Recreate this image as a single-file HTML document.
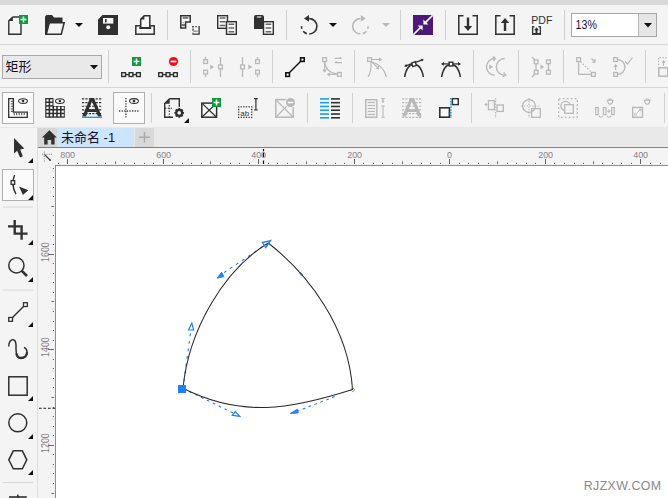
<!DOCTYPE html>
<html lang="zh-CN">
<head>
<meta charset="utf-8">
<title>未命名 -1</title>
<style>
html,body{margin:0;padding:0;}
body{width:668px;height:498px;overflow:hidden;background:#fff;position:relative;font-family:"Liberation Sans","Noto Sans CJK SC",sans-serif;}
.a{position:absolute;}
#topband{left:0;top:0;width:668px;height:4.8px;background:#d9d9d9;}
#bars{left:0;top:4.8px;width:668px;height:123px;background:#f4f4f4;}
.hsep{left:0;width:668px;height:1px;background:#d6d6d6;}
#tabstrip{left:0;top:127px;width:668px;height:20px;background:#e9e9e9;}
#hometab{left:38px;top:127.5px;width:19px;height:19.5px;background:#d6d6d6;}
#doctab{left:57px;top:127.5px;width:77px;height:19.5px;background:#cde4fd;}
#plustab{left:135px;top:127.5px;width:19px;height:19.5px;background:#d9d9d9;}
#blueline{left:38px;top:146.5px;width:630px;height:1.5px;background:#1a9fe8;}
#toolbox{left:0;top:128px;width:37px;height:370px;background:#f4f4f4;}
#tbline{left:37px;top:128px;width:1px;height:370px;background:#dedede;}
#hruler{left:38px;top:148px;width:630px;height:17px;background:#f4f4f4;}
#vruler{left:38px;top:165px;width:17px;height:333px;background:#f4f4f4;}
#hrline{left:56px;top:165px;width:612px;height:1px;background:#8c8c8c;}
#vrline{left:55px;top:165px;width:1px;height:333px;background:#8c8c8c;}
#canvas{left:56px;top:166px;width:612px;height:332px;background:#fff;}
svg{position:absolute;left:0;top:0;}
</style>
</head>
<body>
<div class="a" id="topband"></div>
<div class="a" id="bars"></div>
<div class="a hsep" style="top:44px"></div>
<div class="a hsep" style="top:87px"></div>
<div class="a" id="tabstrip"></div>
<div class="a" id="toolbox"></div>
<div class="a" id="tbline"></div>
<div class="a" id="hometab"></div>
<div class="a" id="doctab"></div>
<div class="a" id="plustab"></div>
<div class="a" id="blueline"></div>
<div class="a" id="hruler"></div>
<div class="a" id="vruler"></div>
<div class="a" id="canvas"></div>
<div class="a" id="hrline"></div>
<div class="a" id="vrline"></div>
<svg width="668" height="498" viewBox="0 0 668 498">
<g transform="translate(8,15)"><path d="M4.7,2 H12 M13,8 V19.2 H0.8 V5.9 L4.7,2" fill="none" stroke="#303030" stroke-width="1.4"/>
<path d="M0.8,6.1 L4.9,2 V6.1 Z" fill="#303030"/>
<rect x="11" y="0" width="9" height="9" fill="#0d9a3d"/>
<path d="M12.6,4.5 H18.4 M15.5,1.6 V7.4" stroke="#fff" stroke-width="1.5"/></g>
<g transform="translate(45,15)"><path d="M0,20 V1.5 L1.5,0 H7 L9,2.5 H17.5 V7 H4.5 L1.2,20 Z" fill="#303030"/>
<path d="M4.3,7.7 H19.2 L16.3,19.3 H1.3 Z" fill="#f4f4f4" stroke="#303030" stroke-width="1.5"/></g>
<path d="M75,23 h8 l-4.0,4 z" fill="#111"/>
<g transform="translate(98,15)"><path d="M4.5,0 H20 V20 H0 V4.5 Z" fill="#303030"/>
<rect x="5" y="3" width="10.3" height="5.6" fill="#f6f6f6"/>
<rect x="7" y="4" width="1.6" height="3.4" fill="#303030"/>
<circle cx="10.2" cy="12.3" r="2" fill="#f6f6f6"/></g>
<g transform="translate(135,15)"><rect x="0.8" y="10.8" width="18.4" height="8.4" fill="#f7f7f7" stroke="#303030" stroke-width="1.5"/>
<path d="M5.7,13 V4.2 L9.2,0.8 H14.8 V13 Z" fill="#f7f7f7" stroke="#303030" stroke-width="1.5"/>
<path d="M5.7,4.4 L9.4,0.8 V4.4 Z" fill="#303030"/>
<path d="M4.3,13 H16.2" stroke="#303030" stroke-width="2"/></g>
<rect x="167" y="10" width="1" height="30" fill="#d0d0d0"/>
<g transform="translate(180,15)"><path d="M0.8,0.8 H10.2 V7.1 H5.6 V13.1 H0.8 Z" fill="#fbfbfb" stroke="#303030" stroke-width="1.5"/>
<path d="M2.7,2.9 H8.3" stroke="#555" stroke-width="1.5"/>
<path d="M2.4,7.8 H4" stroke="#999" stroke-width="1.1"/><path d="M1.6,10 H5" stroke="#303030" stroke-width="1.3"/><path d="M2.4,11.8 H4.4" stroke="#bbb" stroke-width="1"/>
<path d="M19.1,11 V19.1 H12.4" fill="none" stroke="#303030" stroke-width="1.3"/>
<path d="M12.4,11.7 H18.4" stroke="#303030" stroke-width="1.3" stroke-dasharray="1.3,1.7"/>
<path d="M12.9,11.2 V18.4" stroke="#303030" stroke-width="1.2" stroke-dasharray="1.3,2"/>
<path d="M13.2,16.2 H17.6" stroke="#888" stroke-width="1.3"/><path d="M12.4,14.2 H14" stroke="#555" stroke-width="1.2"/></g>
<g transform="translate(217,15)"><rect x="0.7" y="0.7" width="9.8" height="12.6" fill="#f8f8f8" stroke="#303030" stroke-width="1.4"/>
<path d="M2.7,2.9 H8.5 M2.7,6.7 H8.5 M2.7,10.5 H8.5" stroke="#666" stroke-width="1.5"/>
<rect x="9.5" y="6.7" width="9.8" height="12.6" fill="#f8f8f8" stroke="#303030" stroke-width="1.4"/>
<path d="M11.6,9.2 H17.2 M11.6,13 H17.2 M11.6,16.8 H17.2" stroke="#666" stroke-width="1.5"/></g>
<g transform="translate(254,15)"><path d="M0,2 Q0,0 2,0 H8 Q10,0 10,2 V14 H0 Z" fill="#303030"/>
<rect x="2.7" y="1.2" width="4.8" height="1.6" rx="0.8" fill="#c8c8c8"/>
<rect x="9.5" y="6.7" width="9.8" height="12.6" fill="#f8f8f8" stroke="#303030" stroke-width="1.4"/>
<path d="M11.6,9.2 H17.2 M11.6,13 H17.2 M11.6,16.8 H17.2" stroke="#666" stroke-width="1.5"/></g>
<rect x="286" y="10" width="1" height="30" fill="#d0d0d0"/>
<g transform="translate(298,15)"><path d="M11.2,3.6 A7.7,7.7 0 0 1 11.2,19" fill="none" stroke="#303030" stroke-width="1.6"/>
<path d="M11.2,19 A7.7,7.7 0 0 1 3.5,11.3" fill="none" stroke="#303030" stroke-width="1.6" stroke-dasharray="0,2.4,4.4,2.8,2.5,100"/>
<path d="M11,0.1 V6.8 L6,3.4 Z" fill="#303030"/></g>
<path d="M329,23 h8 l-4.0,4 z" fill="#111"/>
<g transform="translate(351,15)"><path d="M9.4,3.6 A7.7,7.7 0 0 0 9.4,19" fill="none" stroke="#b8b8b8" stroke-width="1.6"/>
<path d="M9.4,19 A7.7,7.7 0 0 0 17.1,11.3" fill="none" stroke="#b8b8b8" stroke-width="1.6" stroke-dasharray="0,2.4,4.4,2.8,2.5,100"/>
<path d="M9.8,0.1 V6.8 L14.8,3.4 Z" fill="#b8b8b8"/></g>
<path d="M382,23 h8 l-4.0,4 z" fill="#b8b8b8"/>
<rect x="400" y="10" width="1" height="30" fill="#d0d0d0"/>
<g transform="translate(413,15)"><rect width="20" height="20" fill="#4c1979"/>
<path d="M0.3,19.7 L8.4,11.6 M11.6,8.4 L19.7,0.3" stroke="#fff" stroke-width="1.6"/>
<path d="M9.6,10.4 H4.6 L9.6,15.4 Z M10.4,9.6 V4.6 L15.4,9.6 Z" fill="#fff"/></g>
<rect x="445" y="10" width="1" height="30" fill="#d0d0d0"/>
<g transform="translate(458,15)"><path d="M5.5,0.8 H0.8 V19.2 H19.2 V0.8 H14.5" fill="none" stroke="#303030" stroke-width="1.5"/>
<path d="M10,2.5 V12" stroke="#303030" stroke-width="2.4"/>
<path d="M5.8,11 H14.2 L10,16 Z" fill="#303030"/></g>
<g transform="translate(495,15)"><path d="M5.5,0.8 H0.8 V19.2 H19.2 V0.8 H14.5" fill="none" stroke="#303030" stroke-width="1.5"/>
<path d="M10,16 V7" stroke="#303030" stroke-width="2.4"/>
<path d="M5.8,8 H14.2 L10,3 Z" fill="#303030"/></g>
<text x="531.3" y="23.6" font-size="10.6" fill="#303030" style="font-family:'Liberation Sans',sans-serif">PDF</text>
<g transform="translate(532,26)"><rect x="0" y="0.2" width="9" height="8.6" fill="#fafafa"/>
<path d="M0.65,0.2 V8.8 M8.35,0.2 V8.8" stroke="#303030" stroke-width="1.3"/>
<path d="M0,0.8 H2.6 M6.4,0.8 H9" stroke="#303030" stroke-width="1.2"/>
<rect x="0" y="7" width="9" height="1.9" fill="#303030"/>
<path d="M4.5,1.2 L7,4.2 H5.5 V7.2 H3.5 V4.2 H2 Z" fill="#303030"/></g>
<rect x="564" y="10" width="1" height="30" fill="#d0d0d0"/>
<rect x="571.5" y="13.5" width="85" height="23" fill="#fff" stroke="#a6a6a6"/>
<rect x="639" y="14" width="17" height="22" fill="#e6e6e6"/>
<rect x="638" y="14" width="1" height="22" fill="#b4b4b4"/>
<text x="575.6" y="29.2" font-size="12.4" textLength="21.4" lengthAdjust="spacingAndGlyphs" fill="#1a1030" style="font-family:'Liberation Sans',sans-serif">13%</text>
<path d="M644,23 h8 l-4.0,4.4 z" fill="#111"/>
<rect x="2.5" y="55.5" width="99" height="23" fill="#e9e9e9" stroke="#a9a9a9"/>
<text x="5.6" y="71.2" font-size="13" fill="#141020" style="font-family:'Liberation Sans','Noto Sans CJK SC',sans-serif">矩形</text>
<path d="M90,65 h8 l-4.0,4.4 z" fill="#111"/>
<rect x="108" y="50" width="1" height="33" fill="#d0d0d0"/>
<g transform="translate(121,72)"><path d="M0,2.6 H20" stroke="#303030" stroke-width="1.4"/>
<rect x="0.7" y="0.7" width="3.8" height="3.8" fill="#f6f6f6" stroke="#303030" stroke-width="1.4"/>
<rect x="8.1" y="0.7" width="3.8" height="3.8" fill="#f6f6f6" stroke="#303030" stroke-width="1.4"/>
<rect x="15.5" y="0.7" width="3.8" height="3.8" fill="#f6f6f6" stroke="#303030" stroke-width="1.4"/></g>
<g transform="translate(132,57)"><rect width="9" height="9" fill="#0d9a3d"/><path d="M1.6,4.5 H7.4 M4.5,1.6 V7.4" stroke="#fff" stroke-width="1.5"/></g>
<g transform="translate(158,72)"><path d="M0,2.6 H20" stroke="#303030" stroke-width="1.4"/>
<rect x="0.7" y="0.7" width="3.8" height="3.8" fill="#f6f6f6" stroke="#303030" stroke-width="1.4"/>
<rect x="8.1" y="0.7" width="3.8" height="3.8" fill="#f6f6f6" stroke="#303030" stroke-width="1.4"/>
<rect x="15.5" y="0.7" width="3.8" height="3.8" fill="#f6f6f6" stroke="#303030" stroke-width="1.4"/></g>
<g transform="translate(169,57)"><circle cx="4.5" cy="4.5" r="4.6" fill="#f20d18"/><path d="M1.6,4.5 H7.4" stroke="#fff" stroke-width="1.7"/></g>
<rect x="190" y="50" width="1" height="33" fill="#d0d0d0"/>
<g transform="translate(203,57)"><path d="M2.5,0 V2.5 M2.5,17.5 V20 M17.5,0 V20" stroke="#b8b8b8" stroke-width="1.3"/>
<rect x="0.7" y="2.7" width="3.8" height="3.8" fill="#f4f4f4" stroke="#b8b8b8" stroke-width="1.3"/>
<rect x="0.7" y="13.2" width="3.8" height="3.8" fill="#f4f4f4" stroke="#b8b8b8" stroke-width="1.3"/>
<rect x="15.6" y="8" width="3.8" height="3.8" fill="#f4f4f4" stroke="#b8b8b8" stroke-width="1.3"/>
<path d="M7.2,7.6 L11,10 L7.2,12.4 Z" fill="#b8b8b8"/></g>
<g transform="translate(240,57)"><path d="M17.5,0 V2.5 M17.5,17.5 V20 M2.5,0 V20" stroke="#b8b8b8" stroke-width="1.3"/>
<rect x="15.6" y="2.7" width="3.8" height="3.8" fill="#f4f4f4" stroke="#b8b8b8" stroke-width="1.3"/>
<rect x="15.6" y="13.2" width="3.8" height="3.8" fill="#f4f4f4" stroke="#b8b8b8" stroke-width="1.3"/>
<rect x="0.6" y="8" width="3.8" height="3.8" fill="#f4f4f4" stroke="#b8b8b8" stroke-width="1.3"/>
<path d="M8.4,7.6 L12.2,10 L8.4,12.4 Z" fill="#b8b8b8"/></g>
<rect x="272" y="50" width="1" height="33" fill="#d0d0d0"/>
<g transform="translate(285,57)"><path d="M2.5,17.5 L17.5,2.5" stroke="#111" stroke-width="1.5"/>
<rect x="0.8" y="15.8" width="3.6" height="3.6" fill="#fff" stroke="#111" stroke-width="1.6"/>
<rect x="15.6" y="0.8" width="3.6" height="3.6" fill="#fff" stroke="#111" stroke-width="1.6"/></g>
<g transform="translate(322,57)"><path d="M2.6,4.5 Q3.4,15.2 15.5,17.4" fill="none" stroke="#b8b8b8" stroke-width="1.3"/>
<path d="M2.6,4.5 V14.6 M1,12.6 L2.6,14.9 L4.2,12.6 M15.5,17.5 H6 M8,15.9 L5.7,17.5 L8,19.1" fill="none" stroke="#b8b8b8" stroke-width="1.1"/>
<rect x="0.7" y="0.7" width="3.8" height="3.8" fill="#f4f4f4" stroke="#b8b8b8" stroke-width="1.3"/>
<rect x="15.5" y="15.5" width="3.8" height="3.8" fill="#f4f4f4" stroke="#b8b8b8" stroke-width="1.3"/>
<path d="M12.6,1.4 H19.6 M13,5.7 H20 M17.8,0.2 L19.6,1.4 M13,5.7 L14.8,4.5" fill="none" stroke="#b8b8b8" stroke-width="1.2"/></g>
<rect x="354" y="50" width="1" height="33" fill="#d0d0d0"/>
<g transform="translate(367,57)"><path d="M1,20 Q4.5,15 4,5 M4,5 Q16,7 19.5,20" fill="none" stroke="#b8b8b8" stroke-width="1.2"/>
<path d="M4,2.5 H14 M12,1 L14.3,2.5 L12,4 M4,4 L11.5,11.5 M11.5,9 V11.8 H8.8" fill="none" stroke="#b8b8b8" stroke-width="1.1"/>
<rect x="0.7" y="0.7" width="3.8" height="3.8" fill="#f4f4f4" stroke="#b8b8b8" stroke-width="1.3"/></g>
<g transform="translate(404,57)"><path d="M0.6,20 C2.2,10.5 6.5,7.4 10,7.4 C13.5,7.4 17.8,10.5 19.4,20" fill="none" stroke="#303030" stroke-width="1.5"/>
<path d="M1,9.1 L19,2.6" stroke="#303030" stroke-width="1.2"/>
<path d="M19.9,2.2 L16.8,1.9 L17.8,4.6 Z M0.1,9.5 L3.2,9.8 L2.2,7.1 Z" fill="#303030"/>
<rect x="8.1" y="5.3" width="3.8" height="3.8" fill="#fff" stroke="#303030" stroke-width="1.4" transform="rotate(-20 10 7.2)"/></g>
<g transform="translate(441,57)"><path d="M0.6,20 C2.2,10.5 6.5,7.4 10,7.4 C13.5,7.4 17.8,10.5 19.4,20" fill="none" stroke="#303030" stroke-width="1.5"/>
<path d="M1,6.9 H19" stroke="#303030" stroke-width="1.2"/>
<path d="M0,6.9 L3,5.1 V8.7 Z M20,6.9 L17,5.1 V8.7 Z" fill="#303030"/>
<rect x="8.1" y="5.2" width="3.8" height="3.8" fill="#fff" stroke="#303030" stroke-width="1.4"/></g>
<rect x="473" y="50" width="1" height="33" fill="#d0d0d0"/>
<g transform="translate(486,57)"><path d="M8.8,1.5 A8.3,8.3 0 0 0 8.8,18.1" fill="none" stroke="#b8b8b8" stroke-width="1.4"/>
<path d="M6.6,-0.4 L9.4,1.5 L7.4,4.2" fill="none" stroke="#b8b8b8" stroke-width="1.3"/>
<path d="M18.6,1.5 A8.3,8.3 0 0 0 18.6,18.1" fill="none" stroke="#b8b8b8" stroke-width="1.4"/>
<path d="M17.6,15.4 L19.8,18 L16.6,19.6" fill="none" stroke="#b8b8b8" stroke-width="1.3"/>
<path d="M3.2,7.6 L7.2,9.9 L3.2,12.2 Z" fill="#b8b8b8"/></g>
<rect x="518" y="50" width="1" height="33" fill="#d0d0d0"/>
<g transform="translate(531,57)"><path d="M1,0 L4,3 M1,20 L4,17 M5,6.5 V13.5 M17.5,6.5 V13.5" stroke="#b8b8b8" stroke-width="1.3"/>
<rect x="3.2" y="2.9" width="3.8" height="3.8" fill="#f4f4f4" stroke="#b8b8b8" stroke-width="1.3"/>
<rect x="3.2" y="13.3" width="3.8" height="3.8" fill="#f4f4f4" stroke="#b8b8b8" stroke-width="1.3"/>
<rect x="15.5" y="2.9" width="3.8" height="3.8" fill="#f4f4f4" stroke="#b8b8b8" stroke-width="1.3"/>
<rect x="15.5" y="13.3" width="3.8" height="3.8" fill="#f4f4f4" stroke="#b8b8b8" stroke-width="1.3"/>
<path d="M9.5,7.6 L13.3,10 L9.5,12.4 Z" fill="#b8b8b8"/></g>
<rect x="563" y="50" width="1" height="33" fill="#d0d0d0"/>
<g transform="translate(576,57)"><path d="M2.6,4.5 V17.4 H15.5" fill="none" stroke="#b8b8b8" stroke-width="1.3"/>
<path d="M4.5,4.5 L15.8,15.8" stroke="#b8b8b8" stroke-width="1.2" stroke-dasharray="1.5,1.7"/>
<path d="M15.5,1.5 L19,5 M19,2 V5.2 H15.8" fill="none" stroke="#b8b8b8" stroke-width="1.1"/>
<rect x="0.7" y="0.7" width="3.8" height="3.8" fill="#f4f4f4" stroke="#b8b8b8" stroke-width="1.3"/>
<rect x="15.5" y="15.5" width="3.8" height="3.8" fill="#f4f4f4" stroke="#b8b8b8" stroke-width="1.3"/></g>
<g transform="translate(613,57)"><path d="M4.5,2.6 A7.4,7.4 0 0 1 4.5,17.4" fill="none" stroke="#b8b8b8" stroke-width="1.3"/>
<path d="M2.6,8 V13 M1,9.8 L2.6,7.8 L4.2,9.8" fill="none" stroke="#b8b8b8" stroke-width="1.1"/>
<path d="M12,4.5 L14.5,7 L19.5,0.5" fill="none" stroke="#b8b8b8" stroke-width="1.2"/>
<rect x="0.7" y="0.7" width="3.8" height="3.8" fill="#f4f4f4" stroke="#b8b8b8" stroke-width="1.3"/>
<rect x="0.7" y="15.5" width="3.8" height="3.8" fill="#f4f4f4" stroke="#b8b8b8" stroke-width="1.3"/></g>
<rect x="645" y="50" width="1" height="33" fill="#d0d0d0"/>
<g transform="translate(658,57)"><path d="M0.6,8 V0.6 H10" fill="none" stroke="#b8b8b8" stroke-width="1.2" stroke-dasharray="1.4,1.4"/>
<path d="M5.5,4 V9 M4,5.6 L5.5,3.8 L7,5.6" fill="none" stroke="#b8b8b8" stroke-width="1.1"/>
<rect x="0.8" y="10.8" width="9" height="8.4" fill="#f4f4f4" stroke="#b8b8b8" stroke-width="1.5"/></g>
<rect x="2.5" y="92.5" width="31" height="31" fill="#fbfbfb" stroke="#b0b0b0"/>
<g transform="translate(8,98)"><path d="M0.7,0.7 H5.4 V14.2 H19.3 V19.3 H0.7 Z" fill="#fff" stroke="#303030" stroke-width="1.3"/>
<path d="M2.8,3.4 H5 M2.8,5.9 H5 M2.8,8.4 H5 M2.8,10.9 H5 M2.8,13.4 H5" stroke="#666" stroke-width="1.1"/>
<path d="M6.2,15 V17.2 M8.7,15 V17.2 M11.2,15 V17.2 M13.7,15 V17.2 M16.2,15 V17.2" stroke="#555" stroke-width="1.1"/>
<ellipse cx="15" cy="3.1" rx="4.4" ry="2.4" fill="#fff" stroke="#303030" stroke-width="1.1"/><circle cx="15" cy="3.1" r="1.3" fill="#303030"/></g>
<g transform="translate(45,98)"><path d="M0.2,0 H8.5 V7.9 H19.8 V19.7 H0.2 Z" fill="#303030"/><rect x="1.4" y="1.3" width="2.2" height="2.2" fill="#fff"/><rect x="5.2" y="1.3" width="2.2" height="2.2" fill="#fff"/><rect x="1.4" y="5.0" width="2.2" height="2.2" fill="#fff"/><rect x="5.2" y="5.0" width="2.2" height="2.2" fill="#fff"/><rect x="1.4" y="8.7" width="2.2" height="2.2" fill="#fff"/><rect x="5.2" y="8.7" width="2.2" height="2.2" fill="#fff"/><rect x="9.0" y="8.7" width="2.2" height="2.2" fill="#fff"/><rect x="12.8" y="8.7" width="2.2" height="2.2" fill="#fff"/><rect x="16.6" y="8.7" width="2.2" height="2.2" fill="#fff"/><rect x="1.4" y="12.5" width="2.2" height="2.2" fill="#fff"/><rect x="5.2" y="12.5" width="2.2" height="2.2" fill="#fff"/><rect x="9.0" y="12.5" width="2.2" height="2.2" fill="#fff"/><rect x="12.8" y="12.5" width="2.2" height="2.2" fill="#fff"/><rect x="16.6" y="12.5" width="2.2" height="2.2" fill="#fff"/><rect x="1.4" y="16.2" width="2.2" height="2.2" fill="#fff"/><rect x="5.2" y="16.2" width="2.2" height="2.2" fill="#fff"/><rect x="9.0" y="16.2" width="2.2" height="2.2" fill="#fff"/><rect x="12.8" y="16.2" width="2.2" height="2.2" fill="#fff"/><rect x="16.6" y="16.2" width="2.2" height="2.2" fill="#fff"/><ellipse cx="14.9" cy="3.1" rx="4.4" ry="2.4" fill="#fff" stroke="#303030" stroke-width="1.1"/><circle cx="14.9" cy="3.1" r="1.3" fill="#303030"/></g>
<g transform="translate(82,98)"><path d="M0,0.90 H20" stroke="#303030" stroke-width="1.2" stroke-dasharray="2.2,1.2"/><path d="M0,4.58 H20" stroke="#303030" stroke-width="1.2" stroke-dasharray="2.2,1.2"/><path d="M0,8.26 H20" stroke="#303030" stroke-width="1.2" stroke-dasharray="2.2,1.2"/><path d="M0,11.94 H20" stroke="#303030" stroke-width="1.2" stroke-dasharray="2.2,1.2"/><path d="M0,15.62 H20" stroke="#303030" stroke-width="1.2" stroke-dasharray="2.2,1.2"/><path d="M8.1,0 H11.9 L19.8,18.4 H16 L14.3,14.1 H5.7 L4,18.4 H0.2 Z M6.8,11.3 H13.2 L10,3.3 Z" fill="#303030" fill-rule="evenodd"/><rect x="0" y="18.6" width="20" height="1.4" fill="#1a9fe8"/></g>
<rect x="113.5" y="92.5" width="31" height="31" fill="#fbfbfb" stroke="#b0b0b0"/>
<g transform="translate(119,98)"><path d="M6.9,0 V20" stroke="#444" stroke-width="1.4" stroke-dasharray="1.3,1.3"/>
<path d="M0,13 H20" stroke="#444" stroke-width="1.4" stroke-dasharray="1.3,1.3"/>
<ellipse cx="15" cy="3" rx="4.4" ry="2.4" fill="#fff" stroke="#303030" stroke-width="1.1"/><circle cx="15" cy="3" r="1.3" fill="#303030"/></g>
<rect x="151" y="93" width="1" height="30" fill="#d0d0d0"/>
<g transform="translate(164,98)"><path d="M5.5,0.7 H15.3 V9 M9,19.3 H0.7 V5.5 L5.5,0.7" fill="none" stroke="#303030" stroke-width="1.4"/>
<path d="M0.7,5.7 L5.7,0.7 V5.7 Z" fill="#303030"/>
<path d="M5.3,7 V19" stroke="#303030" stroke-width="1.1" stroke-dasharray="1.4,1.4"/>
<path d="M1,10.3 H9" stroke="#303030" stroke-width="1.1" stroke-dasharray="1.4,1.4"/>
<g transform="translate(15.2,14.9)"><circle r="3" fill="none" stroke="#303030" stroke-width="2.2"/>
<path d="M0,-4.8 V4.8 M-4.8,0 H4.8 M-3.4,-3.4 L3.4,3.4 M-3.4,3.4 L3.4,-3.4" stroke="#303030" stroke-width="1.9"/><circle r="1.8" fill="#f4f4f4"/></g></g>
<path d="M189,123 v-5 l-5,5 z" fill="#111"/>
<g transform="translate(201,98)"><rect x="0.8" y="5.1" width="14.8" height="14.1" fill="#fafafa" stroke="#303030" stroke-width="1.5"/>
<path d="M0.8,5.1 L15.6,19.2 M0.8,19.2 L15.6,5.1" stroke="#303030" stroke-width="1.3"/>
<rect x="11" y="0" width="9" height="9" fill="#0d9a3d"/><path d="M12.6,4.5 H18.4 M15.5,1.6 V7.4" stroke="#fff" stroke-width="1.5"/></g>
<g transform="translate(238,98)"><rect x="0.7" y="8.9" width="13" height="10.4" fill="#f8f8f8" stroke="#303030" stroke-width="1.3" stroke-dasharray="1.3,1.3" stroke-dashoffset="0.65"/>
<text x="2.2" y="17.6" font-size="8" fill="#333" style="font-family:'Liberation Sans',sans-serif">ab</text>
<path d="M17.9,0.5 V12 M16,0.6 H19.8 M16,12 H19.8" stroke="#303030" stroke-width="1.2" fill="none"/></g>
<g transform="translate(275,98)"><rect x="0.8" y="1.6" width="17.4" height="17.6" fill="#f4f4f4" stroke="#b8b8b8" stroke-width="1.5"/>
<path d="M0.8,1.6 L18.2,19.2 M0.8,19.2 L18.2,1.6" stroke="#b8b8b8" stroke-width="1.3"/>
<circle cx="15.5" cy="4.5" r="5.4" fill="#f4f4f4"/>
<circle cx="15.5" cy="4.5" r="4.5" fill="#b8b8b8"/><path d="M12.8,4.5 H18.2" stroke="#fff" stroke-width="1.5"/></g>
<rect x="307" y="93" width="1" height="30" fill="#d0d0d0"/>
<g transform="translate(320,98)"><rect x="0" y="0.10" width="9" height="1.6" fill="#1a9fe8"/><rect x="11" y="0.10" width="9" height="1.6" fill="#303030"/><rect x="0" y="3.88" width="9" height="1.6" fill="#1a9fe8"/><rect x="11" y="3.88" width="9" height="1.6" fill="#303030"/><rect x="0" y="7.66" width="9" height="1.6" fill="#1a9fe8"/><rect x="11" y="7.66" width="9" height="1.6" fill="#303030"/><rect x="0" y="11.44" width="9" height="1.6" fill="#1a9fe8"/><rect x="11" y="11.44" width="9" height="1.6" fill="#303030"/><rect x="0" y="15.22" width="9" height="1.6" fill="#1a9fe8"/><rect x="11" y="15.22" width="9" height="1.6" fill="#303030"/><rect x="0" y="19.00" width="9" height="1.6" fill="#1a9fe8"/><rect x="11" y="19.00" width="9" height="1.6" fill="#303030"/></g>
<rect x="352" y="93" width="1" height="30" fill="#d0d0d0"/>
<g transform="translate(365,98)"><rect x="0.7" y="1.7" width="11.2" height="17.6" fill="#eee" stroke="#b8b8b8" stroke-width="1.4"/>
<path d="M2.8,4.5 H10 M2.8,7.5 H10 M2.8,10.5 H10 M2.8,13.5 H10 M2.8,16.5 H10" stroke="#b8b8b8" stroke-width="1.2"/>
<path d="M18,8 V19 M16.3,8 H19.7 M16.3,19.3 H19.7 M16.3,0.6 H19.7 M18,0.6 V4 M16.8,2.8 L18,4.2 L19.2,2.8" fill="none" stroke="#b8b8b8" stroke-width="1.1"/></g>
<g transform="translate(402,98)"><path d="M0,0.90 H20" stroke="#b8b8b8" stroke-width="1.2" stroke-dasharray="2.2,1.2"/><path d="M0,4.58 H20" stroke="#b8b8b8" stroke-width="1.2" stroke-dasharray="2.2,1.2"/><path d="M0,8.26 H20" stroke="#b8b8b8" stroke-width="1.2" stroke-dasharray="2.2,1.2"/><path d="M0,11.94 H20" stroke="#b8b8b8" stroke-width="1.2" stroke-dasharray="2.2,1.2"/><path d="M0,15.62 H20" stroke="#b8b8b8" stroke-width="1.2" stroke-dasharray="2.2,1.2"/><path d="M0,19.30 H20" stroke="#b8b8b8" stroke-width="1.2" stroke-dasharray="2.2,1.2"/><path d="M8.1,0 H11.9 L19.8,18.4 H16 L14.3,14.1 H5.7 L4,18.4 H0.2 Z M6.8,11.3 H13.2 L10,3.3 Z" fill="#b8b8b8" fill-rule="evenodd"/></g>
<g transform="translate(439,98)"><rect x="0.8" y="9.8" width="9.6" height="9.4" fill="#f8f8f8" stroke="#303030" stroke-width="1.6"/>
<rect x="13.4" y="0.7" width="5.9" height="5.9" fill="#f8f8f8" stroke="#303030" stroke-width="1.4"/>
<path d="M11.9,0 V20" stroke="#1a9fe8" stroke-width="1.6" stroke-dasharray="1.6,1.2"/></g>
<rect x="471" y="93" width="1" height="30" fill="#d0d0d0"/>
<g transform="translate(484,98)"><path d="M11.6,0 V20" stroke="#b8b8b8" stroke-width="1.2" stroke-dasharray="1.4,1.4"/>
<rect x="4.4" y="2.6" width="6" height="9" fill="#f4f4f4" stroke="#b8b8b8" stroke-width="1.3"/>
<rect x="13" y="7" width="6.3" height="6.4" fill="#f4f4f4" stroke="#b8b8b8" stroke-width="1.3"/>
<path d="M0.5,6.5 H3.6 M2,5 V8" stroke="#b8b8b8" stroke-width="1.2"/></g>
<g transform="translate(521,98)"><rect x="10.6" y="10.6" width="8.7" height="8.7" fill="#f4f4f4" stroke="#b8b8b8" stroke-width="1.3"/>
<circle cx="8" cy="8" r="6.4" fill="#f4f4f4" fill-opacity="0" stroke="#b8b8b8" stroke-width="1.3"/>
<path d="M8,0 V20 M0,8 H19" stroke="#b8b8b8" stroke-width="1.2" stroke-dasharray="1.4,1.4"/></g>
<g transform="translate(558,98)"><rect x="0.7" y="0.7" width="18.6" height="18.6" fill="none" stroke="#b8b8b8" stroke-width="1.3" stroke-dasharray="1.8,2.2"/>
<circle cx="7.5" cy="8" r="4.6" fill="#f4f4f4" stroke="#b8b8b8" stroke-width="1.3"/>
<rect x="6.7" y="6.7" width="8.6" height="8.6" fill="#f4f4f4" stroke="#b8b8b8" stroke-width="1.3"/></g>
<g transform="translate(595,98)"><path d="M11.7,2.2 h7 M12.7,2.6 q0,3.6 2.5,3.6 q2.5,0 2.5,-3.6 M13.299999999999999,2.0 q1.9,-2.6 3.8,0" fill="none" stroke="#b8b8b8" stroke-width="1.1"/>
<rect x="0.7" y="9.6" width="2.6" height="7" fill="#f4f4f4" stroke="#b8b8b8" stroke-width="1.2"/>
<rect x="8.4" y="9.6" width="2.6" height="7" fill="#f4f4f4" stroke="#b8b8b8" stroke-width="1.2"/>
<rect x="16.7" y="9.6" width="2.6" height="7" fill="#f4f4f4" stroke="#b8b8b8" stroke-width="1.2"/>
<path d="M4,17.6 L4.8,19.2 H6.8 L7.6,17.6 M12,17.6 L12.8,19.2 H15 L15.8,17.6 M12.2,13.2 H15.6 M13.9,11.4 V15" fill="none" stroke="#b8b8b8" stroke-width="1"/></g>
<g transform="translate(632,98)"><path d="M11.7,2.2 h7 M12.7,2.6 q0,3.6 2.5,3.6 q2.5,0 2.5,-3.6 M13.299999999999999,2.0 q1.9,-2.6 3.8,0" fill="none" stroke="#b8b8b8" stroke-width="1.1"/>
<rect x="0.7" y="9.4" width="9.8" height="9.9" fill="#f4f4f4" stroke="#b8b8b8" stroke-width="1.4"/>
<rect x="1.6" y="15.2" width="3.2" height="3.2" fill="#d4d4d4"/>
<path d="M4.4,15.6 L9,11 M6.8,11 H9.1 V13.3" fill="none" stroke="#b8b8b8" stroke-width="1"/></g>
<rect x="664" y="93" width="1" height="30" fill="#d0d0d0"/>
<path d="M42,137.6 L49.4,130.2 L56.8,137.6 H54.6 V144.6 H51.2 V140 H47.6 V144.6 H44.2 V137.6 Z" fill="#303030"/>
<text x="61" y="142" font-size="13" fill="#15102a" style="font-family:'Liberation Sans','Noto Sans CJK SC',sans-serif">未命名 -1</text>
<path d="M139,137.2 H150 M144.5,132 V142.4" stroke="#aaa" stroke-width="1.5"/>
<rect x="58" y="162.8" width="1" height="1.2" fill="#666"/><rect x="67" y="159" width="1" height="5" fill="#606060"/><rect x="77" y="162.8" width="1" height="1.2" fill="#666"/><rect x="86" y="162.8" width="1" height="1.2" fill="#666"/><rect x="96" y="162.8" width="1" height="1.2" fill="#666"/><rect x="105" y="162.8" width="1" height="1.2" fill="#666"/><rect x="115" y="161.4" width="1" height="2.6" fill="#666"/><rect x="124" y="162.8" width="1" height="1.2" fill="#666"/><rect x="134" y="162.8" width="1" height="1.2" fill="#666"/><rect x="144" y="162.8" width="1" height="1.2" fill="#666"/><rect x="153" y="162.8" width="1" height="1.2" fill="#666"/><rect x="163" y="159" width="1" height="5" fill="#606060"/><rect x="172" y="162.8" width="1" height="1.2" fill="#666"/><rect x="182" y="162.8" width="1" height="1.2" fill="#666"/><rect x="191" y="162.8" width="1" height="1.2" fill="#666"/><rect x="201" y="162.8" width="1" height="1.2" fill="#666"/><rect x="210" y="161.4" width="1" height="2.6" fill="#666"/><rect x="220" y="162.8" width="1" height="1.2" fill="#666"/><rect x="230" y="162.8" width="1" height="1.2" fill="#666"/><rect x="239" y="162.8" width="1" height="1.2" fill="#666"/><rect x="249" y="162.8" width="1" height="1.2" fill="#666"/><rect x="258" y="159" width="1" height="5" fill="#606060"/><rect x="268" y="162.8" width="1" height="1.2" fill="#666"/><rect x="277" y="162.8" width="1" height="1.2" fill="#666"/><rect x="287" y="162.8" width="1" height="1.2" fill="#666"/><rect x="296" y="162.8" width="1" height="1.2" fill="#666"/><rect x="306" y="161.4" width="1" height="2.6" fill="#666"/><rect x="316" y="162.8" width="1" height="1.2" fill="#666"/><rect x="325" y="162.8" width="1" height="1.2" fill="#666"/><rect x="335" y="162.8" width="1" height="1.2" fill="#666"/><rect x="344" y="162.8" width="1" height="1.2" fill="#666"/><rect x="354" y="159" width="1" height="5" fill="#606060"/><rect x="363" y="162.8" width="1" height="1.2" fill="#666"/><rect x="373" y="162.8" width="1" height="1.2" fill="#666"/><rect x="382" y="162.8" width="1" height="1.2" fill="#666"/><rect x="392" y="162.8" width="1" height="1.2" fill="#666"/><rect x="402" y="161.4" width="1" height="2.6" fill="#666"/><rect x="411" y="162.8" width="1" height="1.2" fill="#666"/><rect x="421" y="162.8" width="1" height="1.2" fill="#666"/><rect x="430" y="162.8" width="1" height="1.2" fill="#666"/><rect x="440" y="162.8" width="1" height="1.2" fill="#666"/><rect x="449" y="159" width="1" height="5" fill="#606060"/><rect x="459" y="162.8" width="1" height="1.2" fill="#666"/><rect x="468" y="162.8" width="1" height="1.2" fill="#666"/><rect x="478" y="162.8" width="1" height="1.2" fill="#666"/><rect x="488" y="162.8" width="1" height="1.2" fill="#666"/><rect x="497" y="161.4" width="1" height="2.6" fill="#666"/><rect x="507" y="162.8" width="1" height="1.2" fill="#666"/><rect x="516" y="162.8" width="1" height="1.2" fill="#666"/><rect x="526" y="162.8" width="1" height="1.2" fill="#666"/><rect x="535" y="162.8" width="1" height="1.2" fill="#666"/><rect x="545" y="159" width="1" height="5" fill="#606060"/><rect x="554" y="162.8" width="1" height="1.2" fill="#666"/><rect x="564" y="162.8" width="1" height="1.2" fill="#666"/><rect x="574" y="162.8" width="1" height="1.2" fill="#666"/><rect x="583" y="162.8" width="1" height="1.2" fill="#666"/><rect x="593" y="161.4" width="1" height="2.6" fill="#666"/><rect x="602" y="162.8" width="1" height="1.2" fill="#666"/><rect x="612" y="162.8" width="1" height="1.2" fill="#666"/><rect x="621" y="162.8" width="1" height="1.2" fill="#666"/><rect x="631" y="162.8" width="1" height="1.2" fill="#666"/><rect x="640" y="159" width="1" height="5" fill="#606060"/><rect x="650" y="162.8" width="1" height="1.2" fill="#666"/><rect x="660" y="162.8" width="1" height="1.2" fill="#666"/><text x="60.2" y="158.1" font-size="9.9" textLength="14.9" lengthAdjust="spacingAndGlyphs" fill="#8a8088" style="font-family:'Liberation Sans',sans-serif">800</text><text x="156.2" y="158.1" font-size="9.9" textLength="14.9" lengthAdjust="spacingAndGlyphs" fill="#8a8088" style="font-family:'Liberation Sans',sans-serif">600</text><text x="251.2" y="158.1" font-size="9.9" textLength="14.9" lengthAdjust="spacingAndGlyphs" fill="#8a8088" style="font-family:'Liberation Sans',sans-serif">400</text><text x="347.2" y="158.1" font-size="9.9" textLength="14.9" lengthAdjust="spacingAndGlyphs" fill="#8a8088" style="font-family:'Liberation Sans',sans-serif">200</text><text x="447.1" y="158.1" font-size="9.9" textLength="5.0" lengthAdjust="spacingAndGlyphs" fill="#8a8088" style="font-family:'Liberation Sans',sans-serif">0</text><text x="538.2" y="158.1" font-size="9.9" textLength="14.9" lengthAdjust="spacingAndGlyphs" fill="#8a8088" style="font-family:'Liberation Sans',sans-serif">200</text><text x="633.2" y="158.1" font-size="9.9" textLength="14.9" lengthAdjust="spacingAndGlyphs" fill="#8a8088" style="font-family:'Liberation Sans',sans-serif">400</text><path d="M263.5,149 V164" stroke="#111" stroke-width="1.2" stroke-dasharray="2.3,1.8,4,3.5,3.6"/><path d="M44.3,151.6 V162" stroke="#888" stroke-width="1.1" stroke-dasharray="1.1,1.1"/><path d="M42,154.3 H52.4" stroke="#888" stroke-width="1.1" stroke-dasharray="1.1,1.1"/><path d="M44.6,154.6 L50,160" stroke="#3a3a3a" stroke-width="1.2"/><rect x="49.3" y="159.3" width="1.6" height="1.6" fill="#333"/><rect x="52.8" y="168" width="1.2" height="1" fill="#666"/><rect x="52.8" y="177" width="1.2" height="1" fill="#666"/><rect x="52.8" y="187" width="1.2" height="1" fill="#666"/><rect x="52.8" y="196" width="1.2" height="1" fill="#666"/><rect x="51.4" y="206" width="2.6" height="1" fill="#666"/><rect x="52.8" y="215" width="1.2" height="1" fill="#666"/><rect x="52.8" y="225" width="1.2" height="1" fill="#666"/><rect x="52.8" y="235" width="1.2" height="1" fill="#666"/><rect x="52.8" y="244" width="1.2" height="1" fill="#666"/><rect x="47.8" y="254" width="6.2" height="1" fill="#686868"/><rect x="52.8" y="263" width="1.2" height="1" fill="#666"/><rect x="52.8" y="273" width="1.2" height="1" fill="#666"/><rect x="52.8" y="282" width="1.2" height="1" fill="#666"/><rect x="52.8" y="292" width="1.2" height="1" fill="#666"/><rect x="51.4" y="301" width="2.6" height="1" fill="#666"/><rect x="52.8" y="311" width="1.2" height="1" fill="#666"/><rect x="52.8" y="321" width="1.2" height="1" fill="#666"/><rect x="52.8" y="330" width="1.2" height="1" fill="#666"/><rect x="52.8" y="340" width="1.2" height="1" fill="#666"/><rect x="47.8" y="349" width="6.2" height="1" fill="#686868"/><rect x="52.8" y="359" width="1.2" height="1" fill="#666"/><rect x="52.8" y="368" width="1.2" height="1" fill="#666"/><rect x="52.8" y="378" width="1.2" height="1" fill="#666"/><rect x="52.8" y="387" width="1.2" height="1" fill="#666"/><rect x="51.4" y="397" width="2.6" height="1" fill="#666"/><rect x="52.8" y="407" width="1.2" height="1" fill="#666"/><rect x="52.8" y="416" width="1.2" height="1" fill="#666"/><rect x="52.8" y="426" width="1.2" height="1" fill="#666"/><rect x="52.8" y="435" width="1.2" height="1" fill="#666"/><rect x="47.8" y="445" width="6.2" height="1" fill="#686868"/><rect x="52.8" y="454" width="1.2" height="1" fill="#666"/><rect x="52.8" y="464" width="1.2" height="1" fill="#666"/><rect x="52.8" y="473" width="1.2" height="1" fill="#666"/><rect x="52.8" y="483" width="1.2" height="1" fill="#666"/><rect x="51.4" y="493" width="2.6" height="1" fill="#666"/><text transform="translate(48.9,262.0) rotate(-90)" font-size="10.1" textLength="19.8" lengthAdjust="spacingAndGlyphs" fill="#8a8088" style="font-family:'Liberation Sans',sans-serif">1600</text><text transform="translate(48.9,357.0) rotate(-90)" font-size="10.1" textLength="19.8" lengthAdjust="spacingAndGlyphs" fill="#8a8088" style="font-family:'Liberation Sans',sans-serif">1400</text><text transform="translate(48.9,453.0) rotate(-90)" font-size="10.1" textLength="19.8" lengthAdjust="spacingAndGlyphs" fill="#8a8088" style="font-family:'Liberation Sans',sans-serif">1200</text><path d="M39,408.2 H55" stroke="#111" stroke-width="1.1" stroke-dasharray="2.6,1.9"/>
<g transform="translate(14,138)"><path d="M0,0 L10.3,10.6 L6.2,11.4 L8.8,18.2 L6,19.6 L3.2,12.8 L0,15.6 Z" fill="#303030"/></g>
<path d="M33,163 v-5 l-5,5 z" fill="#111"/>
<rect x="2.5" y="169.5" width="31" height="31" fill="#fbfbfb" stroke="#b0b0b0"/>
<g transform="translate(9,175)"><path d="M5.6,0 Q1.6,9.5 7,19.2" fill="none" stroke="#303030" stroke-width="1.4"/>
<rect x="2.1" y="5.7" width="3.6" height="3.6" fill="#fff" stroke="#303030" stroke-width="1.3"/>
<path d="M10.1,11.4 L19.3,15.3 L13.9,20 Z" fill="#303030"/></g>
<path d="M33,200 v-5 l-5,5 z" fill="#111"/>
<rect x="3" y="206.6" width="30" height="1" fill="#d8d8d8"/>
<g transform="translate(8,220)"><path d="M6.7,0 V13.6 H19.6 M0,6.4 H13.6 V19.7" fill="none" stroke="#303030" stroke-width="2.4"/></g>
<path d="M33,245 v-5 l-5,5 z" fill="#111"/>
<g transform="translate(8,257)"><circle cx="8.4" cy="8.4" r="7.6" fill="none" stroke="#303030" stroke-width="1.5"/>
<path d="M13.8,13.8 L19,19" stroke="#303030" stroke-width="2.6"/></g>
<path d="M33,282 v-5 l-5,5 z" fill="#111"/>
<rect x="3" y="289.6" width="30" height="1" fill="#d8d8d8"/>
<g transform="translate(8,302)"><path d="M2.5,17.5 L17.5,2.5" stroke="#303030" stroke-width="1.4"/>
<rect x="0.7" y="15.5" width="3.8" height="3.8" fill="#fff" stroke="#303030" stroke-width="1.3"/>
<rect x="15.5" y="0.7" width="3.8" height="3.8" fill="#fff" stroke="#303030" stroke-width="1.3"/></g>
<path d="M33,327 v-5 l-5,5 z" fill="#111"/>
<g transform="translate(8,339)"><path d="M0.7,7.6 C0.7,2.2 3,0.8 4.8,0.8 C8.6,0.8 8,7 8,10 C8,15 9.2,19 12.8,19 C16.5,19 19,16.5 19,13.2 C19,10.6 17.6,9 16,8.4" fill="none" stroke="#303030" stroke-width="1.5"/>
<path d="M8.3,14.5 C9,17.6 10.5,19 12.8,19 C16.5,19 19,16.5 19,13.2" fill="none" stroke="#303030" stroke-width="2.3"/></g>
<g transform="translate(8,376)"><rect x="0.8" y="0.8" width="18.4" height="18.4" fill="none" stroke="#303030" stroke-width="1.5"/></g>
<path d="M33,401 v-5 l-5,5 z" fill="#111"/>
<g transform="translate(8,413)"><circle cx="9.8" cy="9.8" r="9" fill="none" stroke="#303030" stroke-width="1.5"/></g>
<path d="M33,439 v-5 l-5,5 z" fill="#111"/>
<g transform="translate(8,450)"><path d="M5.3,0.8 H14.3 L18.8,9.8 L14.3,18.8 H5.3 L0.8,9.8 Z" fill="none" stroke="#303030" stroke-width="1.5"/></g>
<path d="M33,475 v-5 l-5,5 z" fill="#111"/>
<rect x="3" y="482" width="30" height="1" fill="#d8d8d8"/>
<rect x="9" y="496.2" width="17.8" height="1.6" fill="#303030"/><rect x="17" y="494.6" width="1.6" height="4" fill="#303030"/>
<path d="M183.2,387 L190.8,330.5" stroke="#1e82f5" stroke-width="1.1" stroke-dasharray="3,4.6" stroke-dashoffset="2"/><path d="M191.8,323 L193.6,330 L188.6,330 Z" fill="none" stroke="#1e82f5" stroke-width="1.2" stroke-linejoin="miter"/><path d="M267.4,243.6 L222.4,273.7" stroke="#1e82f5" stroke-width="1.1" stroke-dasharray="2.8,4.4" stroke-dashoffset="1"/><path d="M217.2,278.2 L221.6,272.3 L223.9,276.6 Z" fill="#1e82f5" stroke="#1e82f5" stroke-width="1" stroke-linejoin="miter"/><path d="M184,389 L233.6,413.2" stroke="#1e82f5" stroke-width="1.1" stroke-dasharray="2.8,3.8" stroke-dashoffset="1"/><path d="M239.8,416.3 L232.3,415.2 L235.3,411.5 Z" fill="none" stroke="#1e82f5" stroke-width="1.2" stroke-linejoin="miter"/><path d="M334.6,396.6 L298,411" stroke="#1e82f5" stroke-width="1.1" stroke-dasharray="2.8,3.5" stroke-dashoffset="0"/><path d="M290.4,413.4 L297.6,409.2 L298.2,412.9 Z" fill="#1e82f5" stroke="#1e82f5" stroke-width="1" stroke-linejoin="miter"/><path d="M183,388.3 C188.4,331 223.4,269.9 268.3,243 C308.2,274.3 348.6,326.9 352.5,389.4 C290.3,409.4 241.3,417.8 183,388.3 Z" fill="none" stroke="#30262a" stroke-width="1.05"/><path d="M300,272.7 L302.3,275.2" stroke="#12408a" stroke-width="1.5"/><rect x="178" y="385" width="8" height="8" fill="#1e82f5"/><path d="M270.6,240.6 L262.4,242.5 L265.7,247.5 Z" fill="none" stroke="#1e82f5" stroke-width="1.3" stroke-linejoin="miter"/><path d="M352.8,387.7 L354.8,389.7 L352.8,391.7 L350.8,389.7 Z" fill="none" stroke="#3a9a30" stroke-width="0.9"/>
<text x="583.8" y="490" font-size="12.4" fill="#8a8a8a" textLength="77.2" lengthAdjust="spacing" style="font-family:'Liberation Sans',sans-serif">RJZXW.COM</text>
</svg>
</body>
</html>
